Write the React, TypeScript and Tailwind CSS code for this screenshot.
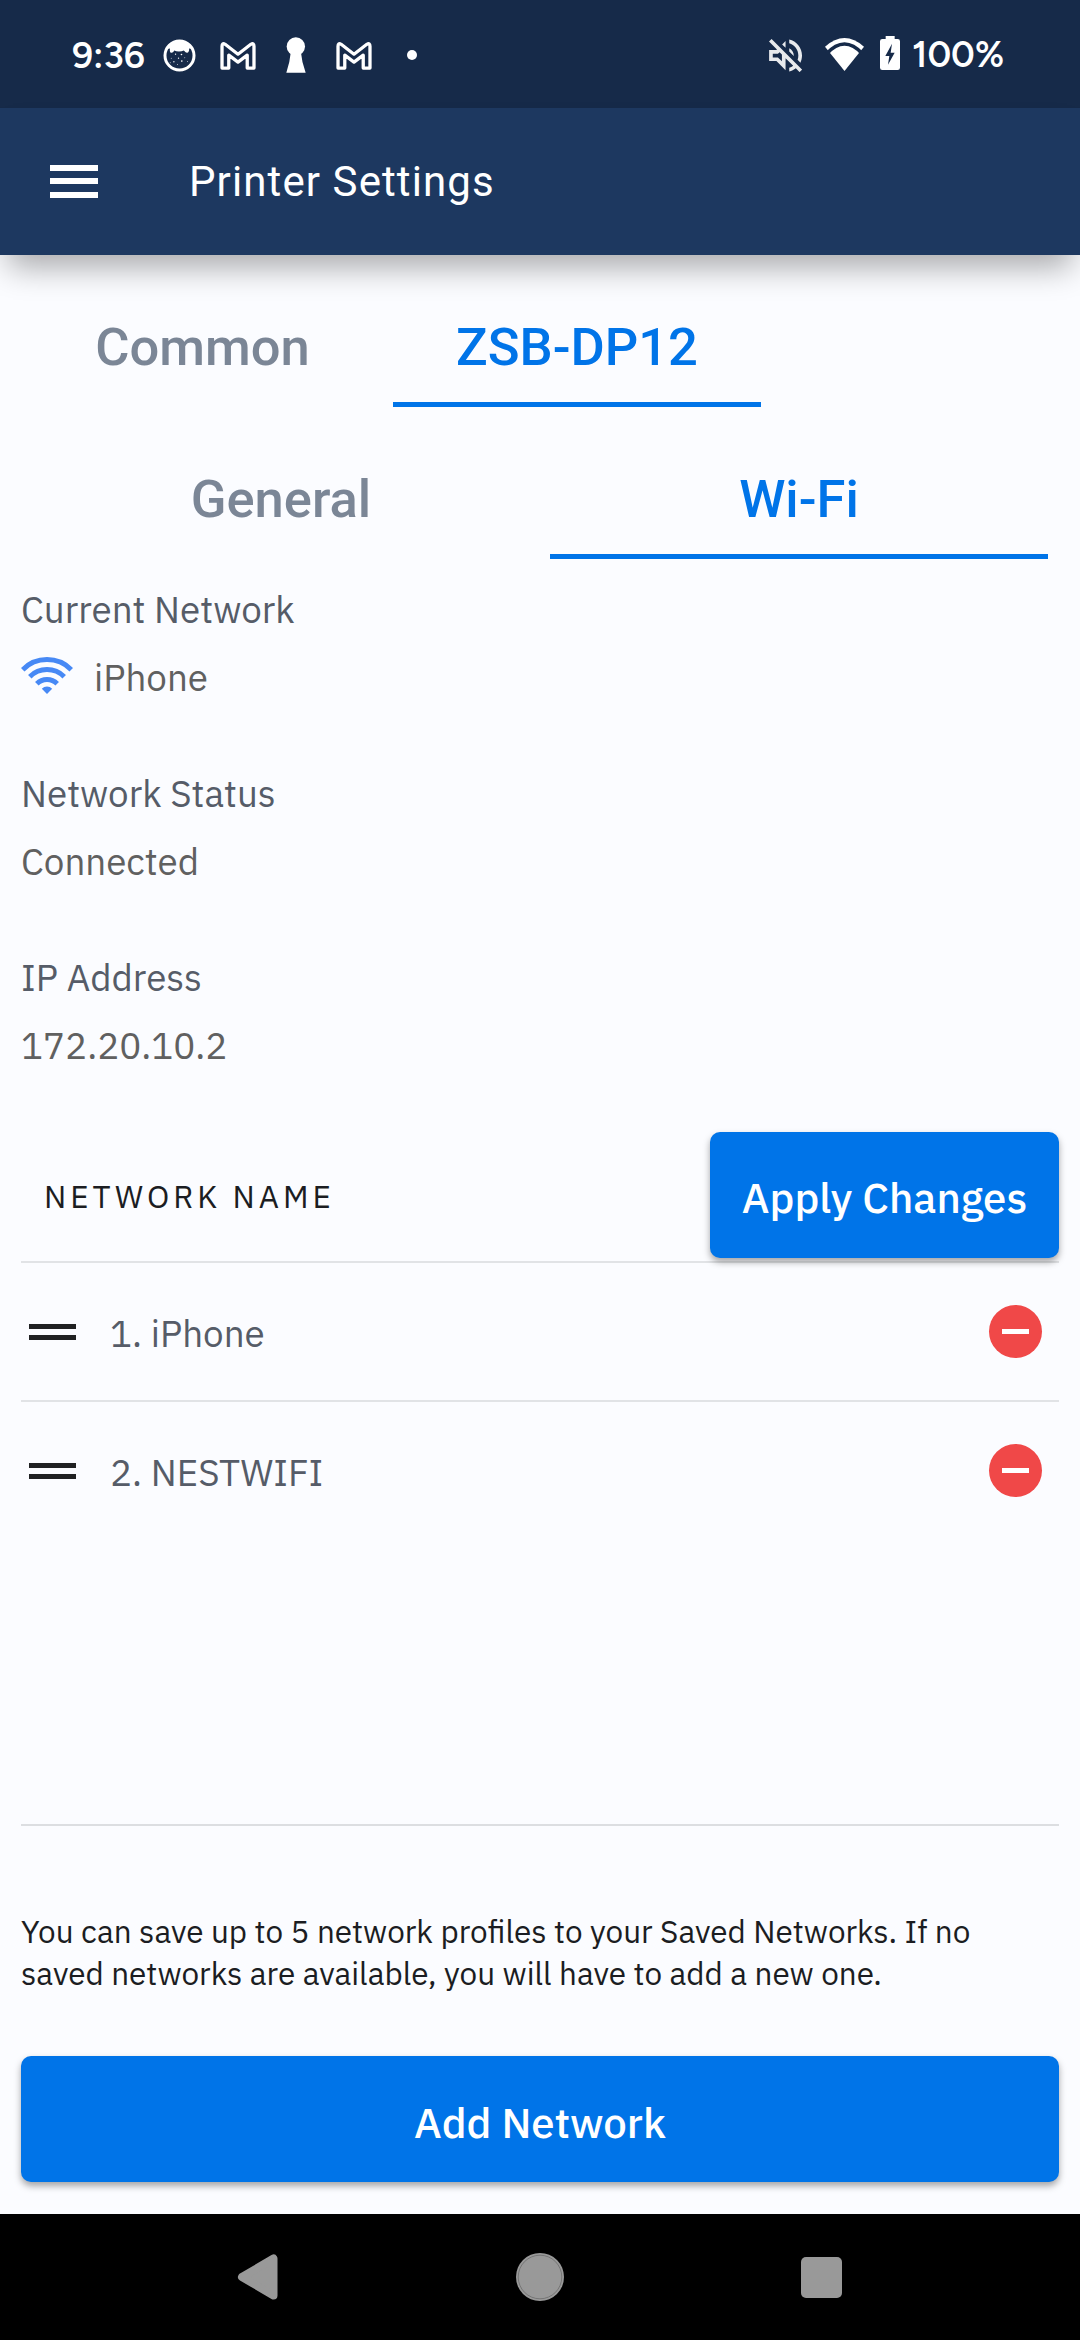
import React from "react";

function GmailIcon({ className }: { className: string }) {
  return (
    <svg viewBox="480 58 108 88" className={`h-[29px] w-[36px] shrink-0 ${className}`} fill="none">
      <path
        d="M485.500 140V74Q485.500 62 495 68L534 98L573 68Q582.500 62 582.500 74V140H562V101L534 122L506 101V140Z"
        stroke="white"
        strokeWidth="10"
        strokeLinejoin="round"
      />
    </svg>
  );
}

function StatusBar() {
  return (
    <div className="flex h-[108px] items-center bg-[#162a49] pt-[2px] pl-[72px] font-['Figtree','Lato',sans-serif] text-[36.75px] leading-[46px] font-semibold text-white">
      <span className="w-[91px] shrink-0">9:36</span>
      <svg viewBox="310 55 100 100" className="h-[33px] w-[33px] shrink-0">
        <circle cx="360" cy="105" r="44" fill="none" stroke="white" strokeWidth="9" />
        <path
          d="M319 85C327 67 341 60 360 60C379 60 393 67 401 85L389 84C390 91 387 97 383 97C378 97 377 92 373 90C365 94 352 94 344 90C341 96 336 99 332 95C330 92 331 88 331 84Z"
          fill="white"
        />
        <g fill="white">
          <circle cx="348" cy="101" r="2" />
          <circle cx="366" cy="102" r="2.500" />
          <circle cx="335" cy="113" r="1.500" />
          <circle cx="357" cy="113" r="2" />
          <circle cx="376" cy="112" r="1.500" />
          <circle cx="343" cy="124" r="2" />
          <circle cx="367" cy="122" r="2.500" />
          <circle cx="384" cy="123" r="1.500" />
          <circle cx="354" cy="132" r="1.500" />
          <circle cx="332" cy="127" r="1.500" />
        </g>
      </svg>
      <GmailIcon className="ml-[24px]" />
      <svg viewBox="678 50 61 109" className="ml-[30px] h-[36px] w-[20px] shrink-0" fill="white">
        <circle cx="708" cy="78.500" r="28" />
        <path d="M693 93H723Q726 126 738 158.500H679Q690 126 693 93Z" />
      </svg>
      <GmailIcon className="ml-[30px]" />
      <span className="ml-[35px] h-[10px] w-[10px] shrink-0 rounded-full bg-white" />

      <svg viewBox="2.930 2.930 18.070 18.070" className="ml-[352px] h-[33px] w-[33px] shrink-0 opacity-90" fill="white">
        <path d="M4.340 2.930L2.930 4.340 7.290 8.700 7 9H3v6h4l5 5v-6.590l4.180 4.180c-.65.49-1.380.88-2.180 1.110v2.060c1.340-.3 2.570-.92 3.610-1.750l2.050 2.050 1.410-1.410L4.340 2.930zM10 15.170L7.830 13H5v-2h2.830l.88-.88L10 11.410v3.760zM19 12c0 .82-.15 1.610-.41 2.340l1.530 1.530c.56-1.170.88-2.480.88-3.870 0-4.280-2.990-7.860-7-8.770v2.060c2.890.86 5 3.540 5 6.710zm-7-8l-1.880 1.880L12 7.760V4zm4.500 8c0-1.770-1.020-3.290-2.500-4.030v1.790l2.480 2.480c.01-.08.02-.16.02-.24z" />
      </svg>
      <svg viewBox="255 51 117 99" className="ml-[23px] h-[33px] w-[39px] shrink-0 -translate-y-px">
        <path d="M313.500 150L255 77Q313.500 25 372 77Z" fill="white" />
        <path d="M260 98Q313.500 40 367 98" fill="none" stroke="#162a49" strokeWidth="11" />
      </svg>
      <svg viewBox="420 48 60 102" className="ml-[16px] h-[34px] w-[20px] shrink-0 -translate-y-[2px]">
        <path d="M437 48H464V57H473Q480 57 480 64V143Q480 150 473 150H427Q420 150 420 143V64Q420 57 427 57H437Z" fill="white" />
        <path d="M456 71L436 108H448L444 134L464 98H452Z" fill="#162a49" />
      </svg>
      <span className="ml-[12px] shrink-0 -translate-y-px">100%</span>
    </div>
  );
}

function AppBar() {
  return (
    <header className="relative flex h-[147px] items-center bg-[#1d3860] pl-[50px] shadow-[0_20px_30px_-8px_rgba(0,0,0,0.33)]">
      <div className="mt-[-1px] flex h-[33px] w-[48px] flex-col justify-between">
        <span className="h-[6px] bg-white" />
        <span className="h-[6px] bg-white" />
        <span className="h-[6px] bg-white" />
      </div>
      <h1 className="mt-[1px] ml-[91px] font-['Roboto',sans-serif] text-[42px] leading-[50px] tracking-[1.1px] text-white">Printer Settings</h1>
    </header>
  );
}

function Tab({ label, active, className }: { label: string; active?: boolean; className: string }) {
  return (
    <div
      className={`flex h-[120px] items-center justify-center border-[#0074e8] font-['Roboto',sans-serif] text-[52.5px] leading-[62px] font-medium ${
        active ? "border-b-[5px] pt-[4px] text-[#0074e8]" : "pb-px text-[#7b8696]"
      } ${className}`}
    >
      {label}
    </div>
  );
}

function NetworkRow({ label }: { label: string }) {
  return (
    <li className="flex h-[139px] items-center border-t-2 border-[#e1e3e6] pr-[17px] pl-[8px]">
      <div className="flex w-[47px] flex-col gap-[6px]">
        <span className="h-[5px] bg-[#202122]" />
        <span className="h-[5px] bg-[#202122]" />
      </div>
      <span className="ml-[34px] pt-[3px] leading-[48px] text-[#565c68]">{label}</span>
      <span className="ml-auto flex h-[53px] w-[53px] items-center justify-center rounded-full bg-[#f04848]">
        <span className="h-[5px] w-[27px] bg-white" />
      </span>
    </li>
  );
}

export default function App() {
  return (
    <div className="flex h-[2340px] w-[1080px] flex-col overflow-hidden bg-[#fbfcff] font-['IBM_Plex_Sans','Noto_Sans',sans-serif]">
      <StatusBar />
      <AppBar />

      <div className="mt-[32px] flex gap-[14px] pl-[26px]">
        <Tab label="Common" className="w-[353px]" />
        <Tab label="ZSB-DP12" active className="w-[368px]" />
      </div>
      <div className="mt-[32px] flex gap-[20px] pl-[32px]">
        <Tab label="General" className="w-[498px]" />
        <Tab label="Wi-Fi" active className="w-[498px]" />
      </div>

      <main className="flex flex-1 flex-col px-[21px] pt-[26px] text-[36.75px] leading-[48px]">
        <p className="text-[#565c68]">Current Network</p>
        <div className="mt-5 flex h-12 items-center">
          <svg viewBox="63.500 261 157 111" className="mt-[-3px] h-[37px] w-[52px]" fill="none" stroke="#4789f5" strokeWidth="15">
            <path d="M68.800 298.800A103.500 103.500 0 0 1 215.200 298.800" />
            <path d="M90 320A73.500 73.500 0 0 1 194 320" />
            <path d="M111.200 341.200A43.500 43.500 0 0 1 172.800 341.200" />
            <path d="M142 372L126.400 356.400A22 22 0 0 1 157.600 356.400Z" fill="#4789f5" stroke="none" />
          </svg>
          <span className="ml-[21px] text-[#606060]">iPhone</span>
        </div>

        <p className="mt-[68px] text-[#565c68]">Network Status</p>
        <p className="mt-5 text-[#606060]">Connected</p>

        <p className="mt-[68px] text-[#565c68]">IP Address</p>
        <p className="mt-5 text-[#606060]">172.20.10.2</p>

        <div className="mt-[63px] flex h-[129px] items-start justify-between">
          <h2 className="ml-[23px] flex h-[129px] items-center text-[31.5px] tracking-[3.94px] text-[#1b1d22]">NETWORK NAME</h2>
          <button className="relative flex h-[126px] w-[349px] items-center justify-center rounded-[10px] bg-[#0074e8] pt-[5px] text-[42px] leading-[56px] font-medium text-white shadow-[0_4px_7px_rgba(0,0,0,0.35)]">
            Apply Changes
          </button>
        </div>

        <ul className="h-[565px] border-b-2 border-[#dcdee1]">
          <NetworkRow label="1. iPhone" />
          <NetworkRow label="2. NESTWIFI" />
        </ul>

        <p className="mt-[85px] text-[31.5px] leading-[42px] text-[#1b1d22]">
          You can save up to 5 network profiles to your Saved Networks. If no
          <br />
          saved networks are available, you will have to add a new one.
        </p>

        <button className="mt-[61px] flex h-[126px] items-center justify-center rounded-[10px] bg-[#0074e8] pt-[8px] text-[42px] leading-[56px] font-medium text-white shadow-[0_4px_7px_rgba(0,0,0,0.35)]">
          Add Network
        </button>
      </main>

      <nav className="flex h-[126px] items-center bg-black pl-[237px]">
        <svg viewBox="0 0 41 46" className="h-[46px] w-[41px]">
          <path d="M5 23L36.500 4.500V41.500Z" fill="#999999" stroke="#999999" strokeWidth="8" strokeLinejoin="round" />
        </svg>
        <svg viewBox="0 0 48 48" className="ml-[238px] h-[48px] w-[48px]">
          <circle cx="24" cy="24" r="24" fill="#999999" />
          <circle cx="24" cy="24" r="21.800" fill="none" stroke="#6c6c6c" strokeWidth="0.800" />
        </svg>
        <span className="ml-[237px] h-[41px] w-[41px] rounded-[5px] bg-[#999999]" />
      </nav>
    </div>
  );
}
